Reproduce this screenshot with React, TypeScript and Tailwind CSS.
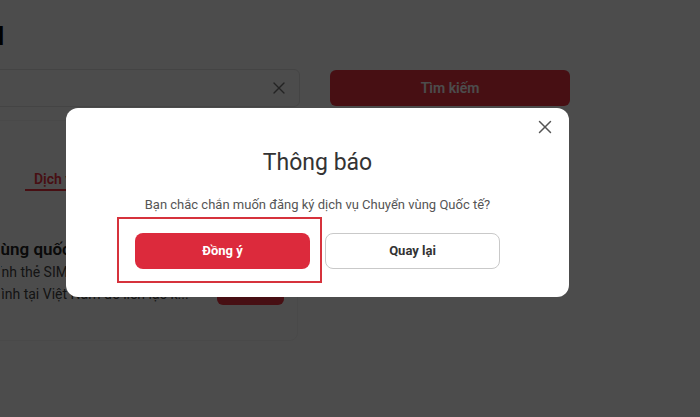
import { X } from "lucide-react";

export default function App() {
  return (
    <div className="relative w-[700px] h-[417px] overflow-hidden bg-white font-['Roboto',sans-serif] text-[#222]">
      {/* Page underneath */}
      <div className="pt-[21px]">
        {/* Heading, scrolled off to the left */}
        <div className="w-[4px] h-[32px] overflow-hidden flex justify-end">
          <h1 className="shrink-0 whitespace-nowrap text-[25px] leading-[32px] font-bold text-black">
            Roaming World
          </h1>
        </div>

        <div className="flex gap-[30px] -ml-[40px] mt-[16px] items-start">
          {/* Left column */}
          <div className="w-[340px] shrink-0">
            <div className="flex items-center h-[38px] border border-[#e3e3e3] rounded-md pl-4 pr-[10px]">
              <input
                className="flex-1 bg-transparent outline-none text-sm"
                placeholder=""
              />
              <X size={20} strokeWidth={1.6} className="text-[#777]" />
            </div>

            <div className="mt-[13px] w-[338px] border border-[#f4f4f4] rounded-lg pt-[48px] pb-[35px]">
              <div className="flex pl-[64px]">
                <button className="px-[9px] text-sm leading-5 font-semibold text-[#ee3342] border-b-2 border-[#ee3342]">
                  Dịch vụ
                </button>
              </div>

              <div className="mt-[46px] flex items-end justify-between pl-[40px] pr-[13px]">
                <div className="overflow-hidden">
                  <div className="-ml-[9px] whitespace-nowrap text-[17px] leading-6 font-semibold text-[#222]">
                    vùng quốc tế
                  </div>
                  <div className="-ml-[18px] whitespace-nowrap text-sm leading-[22px] text-[#444]">
                    chính thẻ SIM và số thuê bao
                  </div>
                  <div className="-ml-[12px] whitespace-nowrap text-sm leading-[22px] text-[#444]">
                    mình tại Việt Nam để liên lạc k...
                  </div>
                </div>
                <button className="w-[67px] h-[32px] shrink-0 rounded-md bg-[#ee3342] text-white text-sm font-semibold">
                  Đăng ký
                </button>
              </div>
            </div>
          </div>

          {/* Right column */}
          <div className="w-[240px] shrink-0 pt-px">
            <button className="w-full h-[36px] rounded-md bg-[#ee3342] text-white text-sm font-semibold">
              Tìm kiếm
            </button>
          </div>
        </div>
      </div>

      {/* Dim overlay */}
      <div className="absolute inset-0 bg-black/70" />

      {/* Dialog */}
      <div className="absolute left-[66px] top-[108px] w-[503px] h-[189px] rounded-xl bg-white">
        <button className="absolute right-[13px] top-[8px] text-[#555]">
          <X size={22} strokeWidth={1.6} />
        </button>
        <div className="flex flex-col items-center pt-[41px]">
          <h2 className="text-[23px] leading-[28px] font-normal text-[#333]">
            Thông báo
          </h2>
          <p className="mt-[18px] text-[13px] leading-5 text-[#555]">
            Bạn chắc chắn muốn đăng ký dịch vụ Chuyển vùng Quốc tế?
          </p>
          <div className="mt-[18px] flex gap-[15px]">
            <button className="w-[175px] h-[36px] rounded-lg bg-[#dc2a3c] text-white text-[13px] font-bold">
              Đồng ý
            </button>
            <button className="w-[175px] h-[36px] rounded-lg border border-[#c9c9c9] bg-white text-[#333] text-[13px] font-bold">
              Quay lại
            </button>
          </div>
        </div>
      </div>

      {/* Highlight annotation */}
      <div className="absolute left-[117px] top-[217px] w-[205px] h-[66px] border-2 border-[#d6323c]" />
    </div>
  );
}
